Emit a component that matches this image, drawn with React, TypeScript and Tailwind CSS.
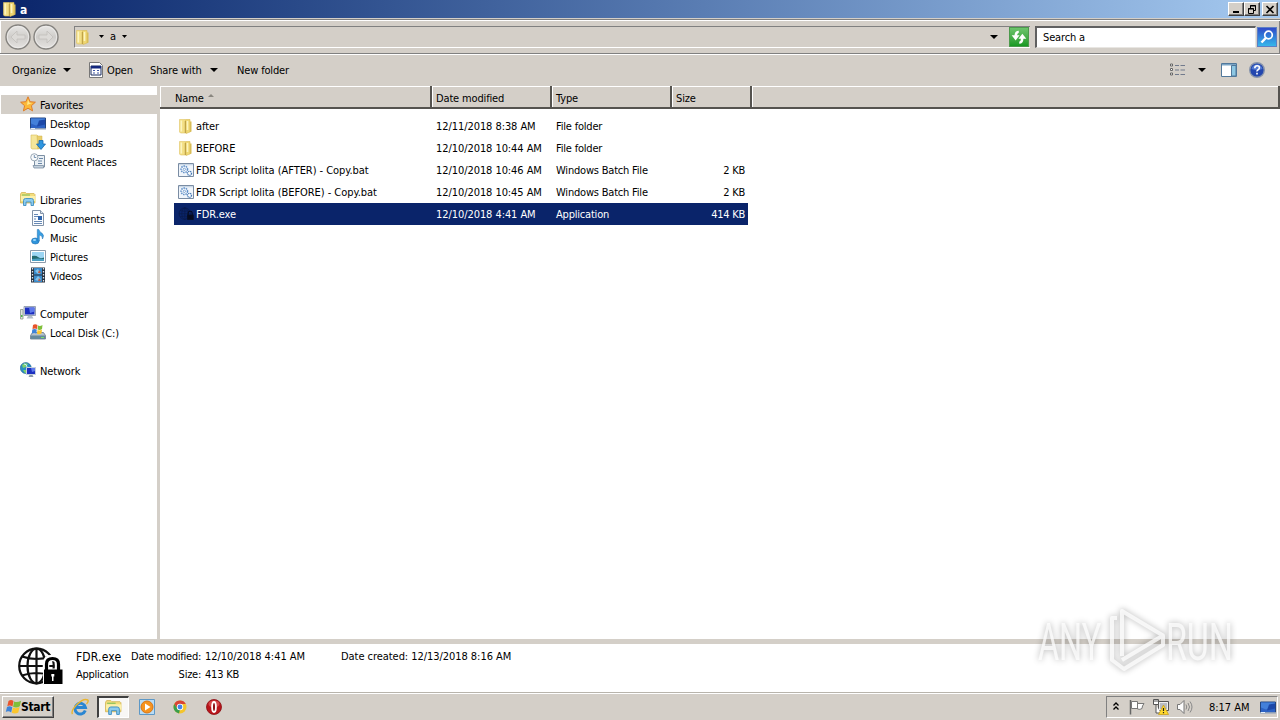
import React from "react";
import { clsx } from "clsx";

const FolderIcon: React.FC = () => (
  <svg width="16" height="16" viewBox="0 0 16 16">
    <path d="M1.500 1.500H7l.8 1V15H2.500l-1-1z" fill="#f3df85" stroke="#e0c566" strokeWidth=".6" />
    <path d="M7.500 1.500h4.500v12.500l-4 1.500z" fill="#efd874" stroke="#d8bb50" strokeWidth=".6" />
    <path d="M12 3.500h1.500v10l-1.500.8z" fill="#d9bd57" />
    <path d="M3.300 2.500v11M9.500 3v9" stroke="#fcf4c0" strokeWidth="1.600" />
    <path d="M7.300 3v12" stroke="#b3943a" strokeWidth=".9" />
  </svg>
);

const BatIcon: React.FC = () => (
  <svg width="16" height="16" viewBox="0 0 16 16">
    <path d="M.5 1.500h15v13H.5z" fill="#f0f5fb" stroke="#7a8ca3" />
    <path d="M1 2h14v1.300H1z" fill="#c9d7e6" />
    <circle cx="6.300" cy="7.300" r="3.200" fill="#fff" stroke="#5f8fc8" strokeWidth="1.600" strokeDasharray="1.500 .8" />
    <circle cx="6.300" cy="7.300" r="1.200" fill="none" stroke="#5f8fc8" strokeWidth=".8" />
    <circle cx="11.500" cy="11.300" r="2" fill="#fff" stroke="#4478b4" strokeWidth="1.300" strokeDasharray="1.200 .6" />
  </svg>
);

const GlobeLock: React.FC<{ size: number; lock: string; ring: string; className?: string }> = ({ size, lock, ring, className }) => (
  <svg width={size} height={size} viewBox="0 0 48 48" className={className}>
    <g fill="none" stroke={ring} strokeWidth="2.200">
      <circle cx="20.500" cy="23" r="17.300" />
      <ellipse cx="20.500" cy="23" rx="9" ry="17.300" />
      <path d="M20.500 5v36M3 23h35M6 13.500q14.500 5 29 0M6 32.500q14.500-5 29 0" />
    </g>
    <path d="M30 27v-6q0-6 6.500-6t6.500 6v6" fill="none" stroke="#fff" strokeWidth={size > 20 ? 6.500 : 0} />
    <path d="M27.500 26h19.500v15.500H27.500z" fill={lock} stroke="#fff" strokeWidth={size > 20 ? 1 : 0} />
    <path d="M30.500 27v-6q0-5.500 6-5.500t6 5.500v6" fill="none" stroke={lock} strokeWidth="3.200" />
    <path d="M35.300 31h3v2.500h-.8v4.500h-1.500v-4.500h-.7z" fill={size > 20 ? "#fff" : lock} />
  </svg>
);

const StarIcon: React.FC = () => (
  <svg width="16" height="16" viewBox="0 0 16 16">
    <path d="M8 .8l2.100 4.900 5.300.5-4 3.500 1.200 5.200L8 12.200l-4.600 2.700 1.200-5.200-4-3.500 5.300-.5z" fill="#fcb93a" stroke="#de7d2c" strokeWidth="1" />
    <path d="M8 3.500l1.300 3.200 3 .3-5.300 2z" fill="#ffe98e" />
  </svg>
);

const DesktopIcon: React.FC = () => (
  <svg width="16" height="16" viewBox="0 0 16 16">
    <path d="M.5 3h15v10.500H.5z" fill="#2c62c4" stroke="#23447e" />
    <path d="M1 3.500h14v3L6 10.500 1 8.500z" fill="#4380da" />
    <path d="M9 5.500l6-1v5l-8 2z" fill="#1c48a8" />
    <path d="M0 13h16v1.500H0z" fill="#8a9db8" />
    <path d="M1 13h4v1H1z" fill="#e3edf8" />
  </svg>
);

const DownloadsIcon: React.FC = () => (
  <svg width="16" height="16" viewBox="0 0 16 16">
    <path d="M1 1h6l1 1v13H2l-1-1z" fill="#f5e69a" stroke="#d6bd5c" strokeWidth=".6" />
    <path d="M7 2h5v12l-4 1z" fill="#e9cf6c" stroke="#d0b04c" strokeWidth=".5" />
    <path d="M9 6.500h4V10h2.500L11 15.500 6.500 10H9z" fill="#2f96e0" stroke="#1768b0" strokeWidth=".8" />
  </svg>
);

const RecentIcon: React.FC = () => (
  <svg width="16" height="16" viewBox="0 0 16 16">
    <path d="M4.500 2.500h10V14h-7l-3-1z" fill="#eaf0f5" stroke="#7c8fa3" />
    <path d="M3 12.500h10.500v2.500H4z" fill="#c3d0dc" stroke="#7c8fa3" strokeWidth=".8" />
    <path d="M9 5.500h4M8 8h4M8 10.500h4" stroke="#6a87a8" />
    <circle cx="4.300" cy="4.300" r="3.600" fill="#f8fafc" stroke="#9aa8b5" />
    <path d="M4.300 2v2.500h2" fill="none" stroke="#56799c" strokeWidth=".8" />
  </svg>
);

const LibraryIcon: React.FC<{ size?: number }> = ({ size = 16 }) => (
  <svg width={size} height={size} viewBox="0 0 16 16">
    <path d="M.5 3l1-1.500h4l1 1H14l1 1V12H.5z" fill="#f3dd7c" stroke="#cfae4a" strokeWidth=".7" />
    <path d="M1 5h14.500v5H1z" fill="#fbf0ab" />
    <path d="M2 4h8" stroke="#7bbf58" />
    <path d="M3.500 14.500V9.500q0-2 2-2h6q2 0 2 2v5h-2.500v-3.500H6v3.500z" fill="#8ccbee" stroke="#3f8fc2" strokeWidth=".9" />
  </svg>
);

const DocumentIcon: React.FC = () => (
  <svg width="16" height="16" viewBox="0 0 16 16">
    <path d="M2.500.5h8l3 3v12h-11z" fill="#fbfdff" stroke="#8293a8" />
    <path d="M10.500.5v3h3" fill="#dae4ee" stroke="#8293a8" />
    <path d="M4 4.500h4M4 6.500h4M4 11.500h8M4 13.500h8M4 9h2" stroke="#6789b5" />
    <path d="M8 6h4v4H8z" fill="#2e65ad" />
  </svg>
);

const MusicIcon: React.FC = () => (
  <svg width="16" height="16" viewBox="0 0 16 16">
    <ellipse cx="5.300" cy="12" rx="3.800" ry="3" fill="#2f95dc" stroke="#1c6db0" strokeWidth=".6" />
    <path d="M7.300 12V.5h1.500q.7 2.500 3 3.500 3 2 .7 6 .3-3.500-3.200-4V12z" fill="#3a9fe2" stroke="#1c6db0" strokeWidth=".5" />
    <ellipse cx="4.500" cy="11" rx="1.600" ry="1" fill="#9ed8fb" />
  </svg>
);

const PicturesIcon: React.FC = () => (
  <svg width="16" height="16" viewBox="0 0 16 16">
    <path d="M.5 2.500h15v12H.5z" fill="#fff" stroke="#8d9bab" />
    <path d="M2 4h12v9H2z" fill="#9cd5f3" />
    <path d="M2 8q4-1 6 1t6 .5V13H2z" fill="#246b70" />
    <path d="M2 11q6-1 12 0v2H2z" fill="#4a9fc2" />
  </svg>
);

const VideosIcon: React.FC = () => (
  <svg width="16" height="16" viewBox="0 0 16 16">
    <path d="M1 .5h14v15H1z" fill="#26313e" />
    <path d="M4 1h8v6.500H4zM4 8.500h8V15H4z" fill="#3a8bcb" />
    <path d="M5 4l3-2 3 4-3 1zM5 13l3-4 3 3-2 2z" fill="#83c3ea" />
    <path d="M9 3l2 3H8zM9 11l2 3H8z" fill="#bd5a44" />
    <path d="M2.500 1v14M13.500 1v14" stroke="#dfe6ee" strokeWidth="1.300" strokeDasharray="1.500 1.500" />
  </svg>
);

const ComputerIcon: React.FC = () => (
  <svg width="16" height="16" viewBox="0 0 16 16">
    <path d="M.5 4.500h2.500V14H.5z" fill="#dfe5dc" stroke="#8b968b" strokeWidth=".8" />
    <path d="M1 10h1.500v2H1z" fill="#50b848" />
    <path d="M4 1.500h11.500v9H4z" fill="#d7dde6" stroke="#8491a3" strokeWidth=".8" />
    <path d="M5 2.500h9.500v7H5z" fill="#1c2fc0" />
    <path d="M9 2.500h5.500v4L10 8z" fill="#5e79ea" />
    <path d="M8 11h4l1.500 2.500h-7z" fill="#b3bdc9" />
  </svg>
);

const DiskIcon: React.FC = () => (
  <svg width="16" height="16" viewBox="0 0 16 16">
    <path d="M2.500 8.500h11l2 3v3.500H.5v-3.500z" fill="#b5c1cc" stroke="#647789" strokeWidth=".8" />
    <path d="M1 11.500h14V15H1z" fill="#65899c" />
    <path d="M11 13h3v1h-3z" fill="#7be06a" />
    <path d="M3 1q2-1.500 4.500 0L7 5q-2-1-4.500 0z" fill="#e8542c" />
    <path d="M8 1.500q2 1 4.500-.5L12 5q-2 1.500-4.500.5z" fill="#7fbf3a" />
    <path d="M2.300 5.500q2-1 4.500 0L6.300 9.500q-2-1-4.500 0z" fill="#3d83d8" />
    <path d="M7.500 6q2 1 4.500-.5l-.5 4q-2 1.500-4.500.3z" fill="#fbc62e" />
  </svg>
);

const NetworkIcon: React.FC = () => (
  <svg width="16" height="16" viewBox="0 0 16 16">
    <circle cx="5.800" cy="6" r="5.500" fill="#2b8fc4" stroke="#23628e" strokeWidth=".6" />
    <path d="M2 3q3-3 6-1l-2 3-3 1zM3 8l3 0 1 3-2 0z" fill="#7fd06a" />
    <path d="M4 2q3 0 3 3" stroke="#c8f1fb" fill="none" />
    <path d="M6.500 5.500h9v7h-9z" fill="#1c2fc0" stroke="#c6d0dc" />
    <path d="M11 6h4v3l-3 1z" fill="#5e79ea" />
    <path d="M9.500 13h3l1 2h-5z" fill="#8c9bab" />
  </svg>
);

const Caret: React.FC<{ small?: boolean }> = ({ small }) =>
  small ? (
    <svg width="5" height="3" viewBox="0 0 5 3"><path d="M0 0h5L2.500 3z" /></svg>
  ) : (
    <svg width="8" height="4" viewBox="0 0 8 4"><path d="M0 0h8L4 4z" /></svg>
  );

const NavCircle: React.FC<{ flip?: boolean }> = ({ flip }) => (
  <svg width="26" height="26" viewBox="0 0 26 26" className={clsx(flip && "-scale-x-100")}>
    <defs>
      <linearGradient id="nav" x1="0" y1="0" x2="0" y2="1">
        <stop offset="0" stopColor="#e9e8e6" />
        <stop offset=".5" stopColor="#cfcdca" />
        <stop offset="1" stopColor="#e6e4e2" />
      </linearGradient>
    </defs>
    <circle cx="13" cy="13" r="12" fill="url(#nav)" stroke="#85837f" strokeWidth="1.400" />
    <circle cx="13" cy="13" r="10.700" fill="none" stroke="#efeeec" strokeWidth=".8" />
    <path d="M6 13l6-6v4h8v4h-8v4z" fill="#dcdad7" stroke="#c2bfbb" strokeWidth=".8" />
  </svg>
);

const WindowsFlag: React.FC = () => (
  <svg width="17" height="16" viewBox="0 0 16 16">
    <path d="M3 2q2.500-2 5 0L7 7.500Q4.500 5.800 1.800 7.300z" fill="#e8542c" />
    <path d="M8.600 2.500q3 1.500 7-.8l-1.300 5.500q-3.500 2.300-6.700.5z" fill="#7fbf3a" />
    <path d="M1.500 8q2.500-1.500 5.300.2L5.700 13.500Q3 11.500.3 13z" fill="#3d83d8" />
    <path d="M7.400 8.500q3 1.500 6.700-.5l-1.300 5.500q-3.300 2-6.500.3z" fill="#fbc62e" />
  </svg>
);

const places = [
  { label: "Favorites", icon: <StarIcon />, root: true, active: true },
  { label: "Desktop", icon: <DesktopIcon /> },
  { label: "Downloads", icon: <DownloadsIcon /> },
  { label: "Recent Places", icon: <RecentIcon /> },
  null,
  { label: "Libraries", icon: <LibraryIcon />, root: true },
  { label: "Documents", icon: <DocumentIcon /> },
  { label: "Music", icon: <MusicIcon /> },
  { label: "Pictures", icon: <PicturesIcon /> },
  { label: "Videos", icon: <VideosIcon /> },
  null,
  { label: "Computer", icon: <ComputerIcon />, root: true },
  { label: "Local Disk (C:)", icon: <DiskIcon /> },
  null,
  { label: "Network", icon: <NetworkIcon />, root: true },
];

const files = [
  { name: "after", date: "12/11/2018 8:38 AM", type: "File folder", size: "", icon: <FolderIcon /> },
  { name: "BEFORE", date: "12/10/2018 10:44 AM", type: "File folder", size: "", icon: <FolderIcon /> },
  { name: "FDR Script lolita (AFTER) - Copy.bat", date: "12/10/2018 10:46 AM", type: "Windows Batch File", size: "2 KB", icon: <BatIcon /> },
  { name: "FDR Script lolita (BEFORE) - Copy.bat", date: "12/10/2018 10:45 AM", type: "Windows Batch File", size: "2 KB", icon: <BatIcon /> },
  { name: "FDR.exe", date: "12/10/2018 4:41 AM", type: "Application", size: "414 KB", icon: <GlobeLock size={16} lock="#050b20" ring="#081a4c" />, selected: true },
];

const columns = [
  { label: "Name", className: "w-[272px] pl-[15px]", sorted: true },
  { label: "Date modified", className: "w-[120px] pl-1" },
  { label: "Type", className: "w-[120px] pl-1" },
  { label: "Size", className: "w-[80px] pl-1" },
];

const raised = "border border-t-white border-l-white border-r-[#404040] border-b-[#404040] shadow-[inset_-1px_-1px_0_#808080]";

const TitleBar: React.FC = () => (
  <div className="flex h-[19px] items-center border-b border-[#d4cfc8] bg-linear-to-r from-[#0a246a] to-[#a6caf0] pl-[2px] pr-[2px]">
    <FolderIcon />
    <span className="ml-[2px] text-[12px] leading-[12px] font-bold text-white">a</span>
    <div className="ml-auto flex">
      <div className={clsx("flex h-[14px] w-4 items-center justify-center bg-[#d4cfc8]", raised)}>
        <svg width="10" height="9" viewBox="0 0 10 9"><path d="M2 6h6v2H2z" /></svg>
      </div>
      <div className={clsx("flex h-[14px] w-4 items-center justify-center bg-[#d4cfc8]", raised)}>
        <svg width="10" height="9" viewBox="0 0 10 9" fill="none" stroke="#000">
          <path d="M3.500 3V.5h5v5H7M3 1h6M1.500 3.500h5v5h-5zM1 4h6" />
        </svg>
      </div>
      <div className={clsx("ml-[2px] flex h-[14px] w-4 items-center justify-center bg-[#d4cfc8]", raised)}>
        <svg width="10" height="9" viewBox="0 0 10 9" stroke="#000" strokeWidth="1.600"><path d="M1.500 1l7 7M8.500 1l-7 7" /></svg>
      </div>
    </div>
  </div>
);

const AddressBar: React.FC = () => (
  <div className="flex h-[35px] items-center border-t border-b border-t-[#808080] border-b-[#808080] pt-px pl-[5px] shadow-[inset_1px_1px_0_#fff,inset_-1px_0_0_#808080]">
    <div className="flex gap-[2px]">
      <NavCircle />
      <NavCircle flip />
    </div>
    <div className="ml-[15px] flex h-[22px] w-[956px] items-center border-t border-l border-b border-t-[#808080] border-l-[#808080] border-b-white">
      <FolderIcon />
      <div className="-mt-[2px] ml-[8px] flex items-center gap-[6px]">
        <Caret small />
        <span>a</span>
        <Caret small />
      </div>
      <div className="ml-auto mr-[11px]"><Caret /></div>
      <div className="mr-px flex h-5 w-5 items-center justify-center border border-[#4c9a4c] bg-linear-to-b from-[#6cc46c] to-[#159a22]">
        <svg width="18" height="18" viewBox="0 0 16 16" fill="#fff" className="shrink-0">
          <path d="M7.800 2.500Q4.300 2.500 4 6.500H1.500l3.500 4.500L8.500 6.500H6.300Q6.300 4.700 7.800 4.200zM8.200 14q3.700 0 3.700-4.500h2.600L11 5l-3.500 4.500h2.200q0 2-1.500 2.700z" />
        </svg>
      </div>
    </div>
    <div className="ml-[5px] flex h-[22px] w-[221px] items-center border-t-2 border-l-2 border-b border-r border-t-[#606060] border-l-[#606060] border-b-[#e8e6e2] border-r-[#e8e6e2] bg-white pl-[6px]">
      <span className="-mt-[2px]">Search a</span>
    </div>
    <div className="ml-px flex h-5 w-5 items-center justify-center border border-[#5d7fc4] bg-linear-to-b from-[#3149c8] to-[#37b6ea]">
      <svg width="16" height="16" viewBox="0 0 16 16" fill="none" stroke="#fff">
        <circle cx="9.500" cy="6" r="3.800" strokeWidth="1.700" />
        <path d="M6.800 9L2.500 13.500" strokeWidth="2.500" />
      </svg>
    </div>
  </div>
);

const Toolbar: React.FC = () => (
  <div className="flex h-8 items-center border-t border-white pl-3 pr-[15px] pb-[2px]">
    <span className="w-[51px] tracking-[-0.03px]">Organize</span>
    <Caret />
    <svg width="16" height="16" viewBox="0 0 16 16" className="ml-[17px]">
      <path d="M1.500.5h10l3 3v12h-13z" fill="#fff" stroke="#777" />
      <path d="M3 4h10v9H3z" fill="#fff" stroke="#14285e" />
      <path d="M3 4h10v2.500H3z" fill="#14287e" />
      <path d="M5 8.500h2M9 8.500h2M5 11h2M9 11h2" stroke="#3e56a8" />
    </svg>
    <span className="ml-[3px] w-[43px]">Open</span>
    <span className="w-[60px] tracking-[-0.1px]">Share with</span>
    <Caret />
    <span className="ml-[19px]">New folder</span>
    <div className="ml-auto flex items-center">
      <svg width="16" height="14" viewBox="0 0 16 14">
        <path d="M1.500 1h2v2h-2zM1.500 5.500h2v2h-2zM1.500 10h2v2h-2z" fill="#fff" stroke="#666" />
        <path d="M6 2.500h4M11.500 2.500H16M6 7h4M11.500 7H16M6 11.500h4M11.500 11.500H16" stroke="#717a8c" />
      </svg>
      <div className="ml-[13px]"><Caret /></div>
      <svg width="16" height="14" viewBox="0 0 16 14" className="ml-[15px]">
        <path d="M.5.5h15v13H.5z" fill="#fff" stroke="#51789b" />
        <path d="M1 1h14v1.500H1z" fill="#7ba4c4" />
        <path d="M10.500 2.500h4.500v10.500h-4.500z" fill="#8dc8e4" stroke="#51789b" />
      </svg>
      <svg width="16" height="16" viewBox="0 0 16 16" className="ml-[12px]">
        <circle cx="8" cy="8" r="7.300" fill="#2346ae" stroke="#8794ac" strokeWidth="1.400" />
        <path d="M2.500 7q1-4.500 5.500-4.500T13.500 7q-5.500 2-11 0z" fill="#5279d2" />
        <path d="M5.800 6.200q0-2.400 2.300-2.400t2.300 2q0 1.200-1.300 1.900t-1 1.800M8 10.800v1.700" fill="none" stroke="#fff" strokeWidth="1.600" />
      </svg>
    </div>
  </div>
);

const Sidebar: React.FC = () => (
  <div className="w-[157px] shrink-0 pt-[9px]">
    {places.map((p, i) =>
      p ? (
        <div key={i} className={clsx("ml-px flex h-[19px] items-center [&>svg]:-mt-px", p.root ? "pl-[19px]" : "pl-[29px]", p.active && "bg-[#d4cfc8]")}>
          {p.icon}
          <span className="ml-[4px]">{p.label}</span>
        </div>
      ) : (
        <div key={i} className="h-[19px]" />
      )
    )}
  </div>
);

const FileList: React.FC = () => (
  <div className="grow">
    <div className="flex h-[23px] border-b-2 border-[#55534f] bg-[#d4cfc8] shadow-[inset_0_1px_0_#fff]">
      {columns.map((c) => (
        <div key={c.label} className={clsx("flex items-center border-r-2 border-l border-r-[#55534f] border-l-white pt-[2px]", c.className)}>
          <span className="-ml-px">{c.label}</span>
          {c.sorted && <svg width="6" height="3" viewBox="0 0 6 3" className="mb-[4px] ml-[4px]"><path d="M0 3h6L3 0z" fill="#8a8780" /></svg>}
        </div>
      ))}
      <div className="grow border-r-2 border-l border-r-[#55534f] border-l-white" />
    </div>
    <div className="ml-[14px] mt-[6px] w-[574px]">
      {files.map((f) => (
        <div key={f.name} className={clsx("flex h-[22px] items-center pl-1 [&>svg]:-mt-px", f.selected && "bg-[#0a246a] text-white")}>
          {f.icon}
          <span className="ml-[2px] w-[240px] tracking-[-0.05px]">{f.name}</span>
          <span className="w-[120px] tracking-[-0.07px]">{f.date}</span>
          <span className="w-[120px] tracking-[-0.2px]">{f.type}</span>
          <span className="ml-auto pr-[3px] tracking-[-0.25px]">{f.size}</span>
        </div>
      ))}
    </div>
  </div>
);

const Details: React.FC = () => (
  <div className="flex h-12 items-start bg-white pl-4">
    <GlobeLock size={48} lock="#000" ring="#111" className="-mt-px" />
    <div className="ml-3 grid grid-cols-[55px_70px_140px_auto] pt-[3px] leading-4 tracking-[-0.05px]">
      <span className="text-[12px] tracking-[0.15px]">FDR.exe</span>
      <span className="text-right tracking-[-0.25px]">Date modified:</span>
      <span className="pl-1">12/10/2018 4:41 AM</span>
      <span>Date created: 12/13/2018 8:16 AM</span>
      <span className="tracking-[-0.25px]">Application</span>
      <span className="text-right tracking-[-0.25px]">Size:</span>
      <span className="pl-1 tracking-[-0.2px]">413 KB</span>
    </div>
  </div>
);

const Taskbar: React.FC = () => (
  <div className="flex h-7 items-center border-t border-[#b8b4ac] bg-[#d4cfc8] pl-[2px] pr-[2px] shadow-[inset_0_1px_0_#fff]">
    <div className={clsx("flex h-[22px] w-[52px] items-center pl-[2px]", raised)}>
      <WindowsFlag />
      <span className="-mt-[2px] -ml-px text-[12px] font-bold tracking-[-0.35px]">Start</span>
    </div>
    <svg width="18" height="18" viewBox="0 0 18 18" className="ml-[17px]">
      <path d="M14.300 12.500A5.300 5.300 0 1 1 14.500 9.500H5" fill="none" stroke="#2a86d2" strokeWidth="2.900" />
      <path d="M1.500 16Q-.5 13 6 6.500T16.800 2Q18 3.500 15.500 6" fill="none" stroke="#eab52e" strokeWidth="1.400" />
    </svg>
    <div className="ml-[8px] flex h-[22px] w-8 items-center justify-center border-t-2 border-l-2 border-b border-r border-t-[#404040] border-l-[#404040] border-b-white border-r-white bg-[#f8f7f5]">
      <LibraryIcon size={17} />
    </div>
    <svg width="16" height="16" viewBox="0 0 16 16" className="ml-[10px]">
      <path d="M.5.5h15v15H.5z" fill="#b9dcf5" stroke="#5d98c6" />
      <circle cx="8" cy="8" r="6" fill="#f6931e" stroke="#d97412" />
      <path d="M6 4.500v7L11.500 8z" fill="#fff" />
    </svg>
    <svg width="14" height="14" viewBox="0 0 14 14" className="ml-[18px]">
      <circle cx="7" cy="7" r="6.500" fill="#f4c52c" />
      <path d="M1.300 4A6.500 6.500 0 0 1 12.800 4H7L4 8z" fill="#d94435" />
      <path d="M1.300 4L5 9.500l2 0-1 4A6.500 6.500 0 0 1 1.300 4z" fill="#3a9e4c" />
      <circle cx="7" cy="7" r="3.200" fill="#fff" />
      <circle cx="7" cy="7" r="2.400" fill="#4384ea" />
    </svg>
    <svg width="16" height="16" viewBox="0 0 16 16" className="ml-[19px]">
      <circle cx="8" cy="8" r="7.500" fill="#b9151b" stroke="#8a0d12" strokeWidth=".8" />
      <ellipse cx="8" cy="5" rx="5.500" ry="3.500" fill="#d8494c" />
      <ellipse cx="8" cy="8" rx="1.900" ry="5" fill="#8e0f14" stroke="#fff" strokeWidth="1.800" />
    </svg>
    <div className="ml-auto flex h-[22px] w-[172px] items-center border border-t-[#808080] border-l-[#808080] border-b-white border-r-white pl-[6px]">
      <svg width="6" height="9" viewBox="0 0 6 9" fill="none" stroke="#000" strokeWidth="1.300"><path d="M.5 3.500L3 1l2.500 2.500M.5 7.500L3 5l2.500 2.500" /></svg>
      <svg width="16" height="16" viewBox="0 0 16 16" className="ml-[10px]">
        <path d="M1.500 1v14.500" stroke="#666" strokeWidth="1.500" />
        <path d="M2.500 2.500h6v7h-6zM8.500 4.500h6.500q-2 2.500-2 5-2 1.500-4.500.5z" fill="#fdfdfd" stroke="#777" />
      </svg>
      <svg width="16" height="16" viewBox="0 0 16 16" className="ml-[8px]">
        <path d="M5.500 2.500h10v9h-10z" fill="#eee" stroke="#555" />
        <path d="M7 4h7v6H7z" fill="#b8bcc2" />
        <path d="M.5.500h5v5h-5zM3 6v8h5" fill="#fff" stroke="#555" />
        <path d="M2 1v2M4 1v2" stroke="#555" />
        <path d="M10.500 6l5 9.500h-10z" fill="#ffd92e" stroke="#c49a10" strokeWidth=".7" />
        <path d="M10.500 9v3M10.500 13v1.300" stroke="#222" strokeWidth="1.200" />
      </svg>
      <svg width="16" height="14" viewBox="0 0 16 14" className="ml-[8px]">
        <path d="M.5 4.500h2.500l4-4v13l-4-4H.5z" fill="#fdfdfd" stroke="#777" />
        <path d="M9 4.500q1.500 2.500 0 5M11 3q3 4 0 8M13 1.500q4 5.500 0 11" fill="none" stroke="#888" />
      </svg>
      <span className="ml-[16px] w-[51px] tracking-[-0.02px]">8:17 AM</span>
      <DesktopIcon />
    </div>
  </div>
);

const Watermark: React.FC = () => (
  <svg width="250" height="80" viewBox="0 0 250 80" className="pointer-events-none absolute bottom-[40px] left-[1030px] drop-shadow-[0_0_3px_rgba(0,0,0,0.4)]">
    <g fill="#fff" fillOpacity=".75" fontFamily="Roboto, sans-serif" fontSize="51">
      <text x="8" y="59.500" textLength="63" lengthAdjust="spacingAndGlyphs">ANY</text>
      <text x="136" y="59.500" textLength="67" lengthAdjust="spacingAndGlyphs">RUN</text>
    </g>
    <g fill="none" stroke="#fff" strokeOpacity=".75" strokeWidth="4" strokeLinejoin="round">
      <path d="M92 56V11l41 24.500-41 24.500M87 18h-5v42l12 9 39-24v-9" />
    </g>
  </svg>
);

const App: React.FC = () => {
  return (
    <div className="relative flex h-[720px] w-[1280px] flex-col overflow-hidden bg-[#d4cfc8] font-['DejaVu_Sans_Condensed','DejaVu_Sans',sans-serif] text-[11px] leading-[14px] tracking-[-0.15px] whitespace-nowrap text-black [&_span]:pt-[2px]">
      <TitleBar />
      <AddressBar />
      <Toolbar />
      <div className="flex grow bg-white">
        <Sidebar />
        <div className="w-[3px] shrink-0 bg-[#d4cfc8]" />
        <FileList />
      </div>
      <div className="h-[5px] bg-[#d4cfc8]" />
      <Details />
      <Taskbar />
      <Watermark />
    </div>
  );
};

export default App;
